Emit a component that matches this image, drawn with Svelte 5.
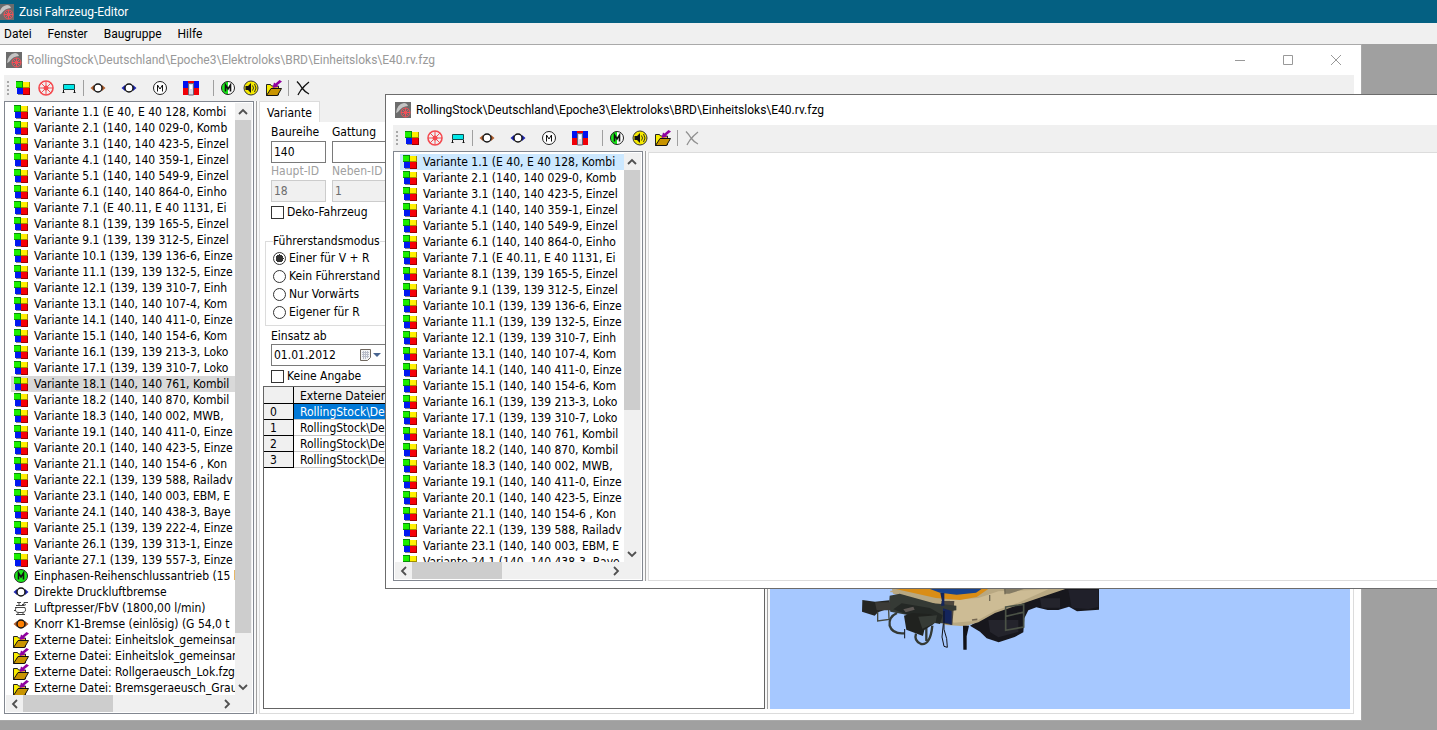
<script>
  const variants = [
    '1.1 (E 40, E 40 128, Kombi',
    '2.1 (140, 140 029-0, Komb',
    '3.1 (140, 140 423-5, Einzel',
    '4.1 (140, 140 359-1, Einzel',
    '5.1 (140, 140 549-9, Einzel',
    '6.1 (140, 140 864-0, Einho',
    '7.1 (E 40.11, E 40 1131, Ei',
    '8.1 (139, 139 165-5, Einzel',
    '9.1 (139, 139 312-5, Einzel',
    '10.1 (139, 139 136-6, Einze',
    '11.1 (139, 139 132-5, Einze',
    '12.1 (139, 139 310-7, Einh',
    '13.1 (140, 140 107-4, Kom',
    '14.1 (140, 140 411-0, Einze',
    '15.1 (140, 140 154-6, Kom',
    '16.1 (139, 139 213-3, Loko',
    '17.1 (139, 139 310-7, Loko',
    '18.1 (140, 140 761, Kombil',
    '18.2 (140, 140 870, Kombil',
    '18.3 (140, 140 002, MWB,',
    '19.1 (140, 140 411-0, Einze',
    '20.1 (140, 140 423-5, Einze',
    '21.1 (140, 140 154-6 , Kon',
    '22.1 (139, 139 588, Railadv',
    '23.1 (140, 140 003, EBM, E',
    '24.1 (140, 140 438-3, Baye',
    '25.1 (139, 139 222-4, Einze',
    '26.1 (139, 139 313-1, Einze',
    '27.1 (139, 139 557-3, Einze'
  ].map((v) => ({ icon: 'variant', text: 'Variante ' + v }));

  const parts = [
    { icon: 'motorOn', text: 'Einphasen-Reihenschlussantrieb (15 k' },
    { icon: 'brakeBlue', text: 'Direkte Druckluftbremse' },
    { icon: 'pump', text: 'Luftpresser/FbV (1800,00 l/min)' },
    { icon: 'brakeFull', text: 'Knorr K1-Bremse (einlösig) (G 54,0 t' },
    { icon: 'folder', text: 'Externe Datei: Einheitslok_gemeinsar' },
    { icon: 'folder', text: 'Externe Datei: Einheitslok_gemeinsar' },
    { icon: 'folder', text: 'Externe Datei: Rollgeraeusch_Lok.fzg' },
    { icon: 'folder', text: 'Externe Datei: Bremsgeraeusch_Grau' }
  ];

  const rows = [...variants, ...parts];
  const path = 'RollingStock\\Deutschland\\Epoche3\\Elektroloks\\BRD\\Einheitsloks\\E40.rv.fzg';

  const tools = [
    ['variant', 'Variante'],
    ['wheel', 'Achse'],
    ['bogie', 'Drehgestell'],
    null,
    ['brakeBrown', 'Bremse', true],
    ['brakeBlue', 'Direkte Bremse', true],
    ['motor', 'Antrieb', true],
    ['cab', 'Führerstand', true],
    null,
    ['motorHalf', 'Antriebsmodell'],
    ['sound', 'Sound'],
    ['folder', 'Externe Datei'],
    null,
    ['cross', 'Entfernen']
  ];

  const modes = ['Einer für V + R', 'Kein Führerstand', 'Nur Vorwärts', 'Eigener für R'];
  let mode = $state(modes[0]);
  let first = $state(17);
  let second = $state(0);
  let series = $state('140');
  let kind = $state('');
  let date = $state('01.01.2012');
</script>

{#snippet icon(name)}
  <svg class="icon" viewBox="0 0 16 16" width="16" height="16" aria-hidden="true">
    {#if name === 'variant'}
      <path d="M3 3h12v12H3z" fill="#888" />
      <path d="M1 1h7v7H1z" fill="#0a8a0a" /><path d="M1 2h6v5H1z" fill="#1cf000" />
      <path d="M8 2h7v6H8z" fill="#a09000" /><path d="M8 2h6v5H8z" fill="#fff000" />
      <path d="M2 8h6v6H2z" fill="#0018f0" />
      <path d="M8 8h7v7H8z" fill="#900" /><path d="M8 8h6v6H8z" fill="#f60008" />
    {:else if name === 'wheel'}
      <g fill="none" stroke="#f44a50">
        <circle cx="8" cy="8" r="7" stroke-width="1.6" />
        <path d="M8 1v14M1 8h14M3 3l10 10M13 3 3 13" />
      </g>
      <circle cx="8" cy="8" r="2.5" fill="#f44a50" />
    {:else if name === 'bogie'}
      <path d="M2.500 4.500h11v5h-11z" fill="#00e8e8" stroke="#164848" />
      <path d="M2.500 10v3M13.500 10v3M1.500 12.500h2M12.500 12.500h2" stroke="#111" fill="none" />
    {:else if name === 'brakeBrown' || name === 'brakeBlue' || name === 'brakeFull'}
      <path
        d="M0.500 8 4 5v6zM15.500 8 12 5v6z"
        fill={name === 'brakeBlue' ? '#2028b0' : '#b06030'}
      />
      <circle cx="8" cy="8" r="4" fill={name === 'brakeFull' ? '#ff8000' : '#fff'} stroke="#111" stroke-width="1.4" />
    {:else if name === 'motor' || name === 'motorOn' || name === 'motorHalf'}
      <circle cx="8" cy="8" r="6.500" fill={name === 'motorOn' ? '#18e818' : '#fff'} />
      {#if name === 'motorHalf'}<path d="M8 1.500a6.500 6.500 0 0 0 0 13z" fill="#18e818" />{/if}
      <circle cx="8" cy="8" r="6.500" fill="none" stroke="#222" />
      <path d="M5.500 11.500v-6.500l2.500 4 2.500-4v6.500" fill="none" stroke="#111" stroke-width={name === 'motor' ? 1 : 1.6} />
    {:else if name === 'cab'}
      <path d="M0 1h16v7H0z" fill="#0010f0" />
      <path d="M0 8h5v7H0zM11 8h5v7h-5zM5 1h6v2H5z" fill="#f00008" />
      <path d="M5.500 3.500h5V15h-5z" fill="#d8dcec" stroke="#667" />
      <path d="M7 5h2v4H7z" fill="#fff" />
    {:else if name === 'sound'}
      <circle cx="8" cy="8" r="7" fill="#f4e800" stroke="#333" />
      <path d="M2.500 6h2.500l3-3v10l-3-3H2.500z" fill="#111" />
      <path d="M9.500 5.500q2 2.500 0 5M11.500 4q3 4 0 8" fill="none" stroke="#332" />
    {:else if name === 'folder'}
      <path d="M.5 15.500v-11h4l1 1.500h7v9z" fill="#f8ec00" stroke="#222" />
      <path d="M.5 15.500 5 8.500h10.500l-4 7z" fill="#c89400" stroke="#111" />
      <path d="M16 1.500 13.500 0 9.500 3.500 8 2.500 6.500 8l6-1-1.500-1.500z" fill="#9000a0" />
    {:else if name === 'pump'}
      <path
        d="M4 2.500h4M6 2.500v3M9 4.500h2v-2h4M3 5.500h8l2-1M2 7.500h10M3 7.500q-2 5 3 5h3q5 0 3-5M1 10.500h2M3 14.500h9M5 12.500v2M10 12.500v2"
        fill="none"
        stroke="#444"
      />
    {:else if name === 'cross'}
      <path class="cross" d="M2 1.500q3 3 5 6.500 3 4 7 6M14 2Q9 6 6 10q-2 3-3 5" fill="none" stroke-width="1.3" />
    {/if}
  </svg>
{/snippet}

{#snippet appIcon()}
  <svg class="app-icon" viewBox="0 0 16 16" width="16" height="16" aria-hidden="true">
    <path d="M0 0h16v16H0z" fill="#6c6c6c" />
    <path d="M1 11Q2 2 9 1q3 0 4 3Q7 4 3 10z" fill="#c4c4c4" />
    <g fill="none" stroke="#f05058">
      <circle cx="10.500" cy="10.500" r="4.500" />
      <path d="M10.500 6v9M6 10.500h9M7.500 7.500l6 6M13.500 7.500l-6 6" />
    </g>
  </svg>
{/snippet}

{#snippet chevron(turn)}
  <svg width="10" height="10" viewBox="0 0 10 10" aria-hidden="true">
    <path d="M1 7 5 3l4 4" fill="none" stroke="#505050" stroke-width="1.8" transform="rotate({turn} 5 5)" />
  </svg>
{/snippet}

{#snippet childHead(closable)}
  <header class="caption">
    {@render appIcon()}
    <span class="caption-text">{path}</span>
    {#if closable}
      <button class="sys" aria-label="Minimieren"><svg width="12" height="12"><path d="M1 6.500h10" /></svg></button>
      <button class="sys" aria-label="Maximieren"><svg width="12" height="12"><path d="M1.500 1.500h9v9h-9z" /></svg></button>
      <button class="sys" aria-label="Schließen"><svg width="12" height="12"><path d="M1 1l10 10M11 1 1 11" /></svg></button>
    {/if}
  </header>
  <div class="toolbar">
    <span class="grip"></span>
    {#each tools as tool}
      {#if tool}
        <button
          class="tool"
          class:wide={tool[2]}
          aria-label={tool[1]}
          disabled={tool[0] === 'cross' && !closable}
        >{@render icon(tool[0])}</button>
      {:else}
        <span class="sep"></span>
      {/if}
    {/each}
  </div>
{/snippet}

{#snippet tree(selected, pick, shown)}
  <div class="tree">
    <div class="tree-main">
      <ul>
        {#each rows as row, i}
          <li class:selected={i === selected}>
            {@render icon(row.icon)}
            <button class="row" onclick={() => pick(i)}>{row.text}</button>
          </li>
        {/each}
      </ul>
      <div class="vbar">
        <button aria-label="Nach oben">{@render chevron(0)}</button>
        <div class="track"><div class="thumb" style="height: {shown}%"></div></div>
        <button aria-label="Nach unten">{@render chevron(180)}</button>
      </div>
    </div>
    <div class="hbar">
      <button aria-label="Nach links">{@render chevron(270)}</button>
      <div class="track"><div class="thumb" style="width: 46%"></div></div>
      <button aria-label="Nach rechts">{@render chevron(90)}</button>
    </div>
  </div>
{/snippet}

<div class="app">
  <header class="titlebar">{@render appIcon()}<span>Zusi Fahrzeug-Editor</span></header>
  <nav class="menu">
    <button>Datei</button>
    <button>Fenster</button>
    <button>Baugruppe</button>
    <button>Hilfe</button>
  </nav>

  <main class="desktop">
    <section class="child back">
      {@render childHead(true)}
      <div class="client">
        {@render tree(first, (i) => (first = i), 92)}
        <div class="splitter"></div>
        <div class="pages">
          <div class="tabs"><button class="tab">Variante</button></div>
          <div class="page">
            <div class="editor">
              <form class="form">
                <div class="fields">
                  <label>Baureihe <input type="text" bind:value={series} /></label>
                  <label>Gattung <input type="text" bind:value={kind} /></label>
                  <label class="off">Haupt-ID <input type="text" value="18" disabled /></label>
                  <label class="off">Neben-ID <input type="text" value="1" disabled /></label>
                </div>
                <label class="check"><input type="checkbox" />Deko-Fahrzeug</label>
                <fieldset>
                  <legend>Führerstandsmodus</legend>
                  {#each modes as m}
                    <label class="radio"><input type="radio" name="mode" value={m} bind:group={mode} />{m}</label>
                  {/each}
                </fieldset>
                <label class="since" for="since">Einsatz ab</label>
                <div class="date">
                  <input id="since" type="text" bind:value={date} />
                  <button type="button" aria-label="Kalender">
                    <svg width="22" height="14" viewBox="0 0 22 14">
                      <path d="M.5 1.500h10v8l-3 3h-7z" fill="#f4f4f4" stroke="#706860" />
                      <path d="M2 4.500h7M2 6.500h7M2 8.500h7M3.500 3v8M5.500 3v8M7.500 3v7" stroke="#b8bcc8" />
                      <path d="M13 5h8l-4 4z" fill="#486490" />
                    </svg>
                  </button>
                </div>
                <label class="check"><input type="checkbox" />Keine Angabe</label>
              </form>
              <div class="files">
                <table>
                  <thead><tr><th></th><th>Externe Dateien</th></tr></thead>
                  <tbody>
                    {#each [0, 1, 2, 3] as n}
                      <tr><th>{n}</th><td class:current={n === 0}>RollingStock\De</td></tr>
                    {/each}
                  </tbody>
                </table>
              </div>
            </div>
            <div class="splitter"></div>
            <div class="view">
              <svg width="270" height="70" viewBox="0 0 810 210" role="img" aria-label="Lokomotive">
                <path d="M345 122 420 78 500 50 580 25 640 8h92v66l-66 5-24-14-32 10-32 0-34-8-24 9-12 24-3 42-26 14-48 16-36-12-20-20z" fill="#17171d" />
                <path d="M640 14h90v52l-30 6-50-4z" fill="#20202a" />
                <path d="M555 40h60v28h-55zM400 105h90v36l-60 16-25-16z" fill="#24242c" />
                <path d="M110 8h532l-82 28-70 24-70 24-50 28-40 12-58-4-18-9-10-50-130-35z" fill="#b8a882" />
                <path d="M285 45l85-6 60-20 150-6-90 40-70 24-54 30-70 6-10-12z" fill="#cdbc95" />
                <path d="M258 48h40l-6 72-20-3-12-20z" fill="#4e483f" />
                <path d="M105 8h300l-40 28-50 9-72-6z" fill="#d98d16" />
                <path d="M215 8h170l-22 15-58 6-50-6z" fill="#17428c" />
                <path d="M445 8h74l-56 18h-12z" fill="#847b64" /><path d="M450 8v20M404 30v18" stroke="#716955" stroke-width="4" />
                <path d="M104 32l30-6 100 28 70 8v14l-32 4 8 36-30-2-48-16-96-18-4-22z" fill="#353a35" />
                <path d="M140 55l85 14 38 22-8 26-50-10-90-34z" fill="#242825" />
                <path d="M22 45l38 5 43-4v24l-34 12-10 10-38-12z" fill="#242523" />
                <path d="M60 52h46v24H65z" fill="#3c3b37" />
                <path d="M68 80v28l34-5-1-28" fill="none" stroke="#44483f" stroke-width="4" />
                <path d="M126 84q-26 12-22 38 8 26 44 23M183 146q-7 22 15 31 28 5 34-55M214 112v56" fill="none" stroke="#343a36" stroke-width="7" />
                <path d="M147 92l25-8 55 4 20 10-12 20-27 17-4 18-50-19z" fill="#20221f" />
                <path d="M190 95l56-4-4 22-40 18z" fill="#363b36" />
                <path d="M145 73l30-8 4 9-27 8z" fill="#5e5855" />
                <path d="M256 24h12v38h-10l3-14zM264 70v44h12l14 6V78z" fill="#14255c" />
                <path d="M237 46h22v9h-20zM106 17h25v5h-25z" fill="#bba881" />
                <path d="M265 116l-4 40 6 28 10 3-2-26-8-28V78" fill="none" stroke="#111218" stroke-width="3" />
                <path d="M324 122h18l-7 32v40h-10z" fill="#111218" />
                <path d="M149 132v28" stroke="#111218" stroke-width="3" />
                <path d="M351 105l16-2" stroke="#736650" stroke-width="5" />
                <path d="M452 66l54-8v68l-54 10zM452 94l52-12" fill="none" stroke="#4b5246" stroke-width="5" />
              </svg>
            </div>
          </div>
        </div>
      </div>
    </section>

    <section class="child front">
      {@render childHead(false)}
      <div class="client">
        {@render tree(second, (i) => (second = i), 64)}
        <div class="splitter"></div>
        <div class="blank"></div>
      </div>
    </section>
  </main>
</div>

<style>
  :global(body) {
    overflow: hidden;
  }

  .app {
    display: flex;
    flex-direction: column;
    height: 100vh;
    color: #000;
    font: 12px/16px 'DejaVu Sans Condensed', 'DejaVu Sans', sans-serif;
  }

  .app * {
    box-sizing: border-box;
  }

  button,
  input {
    margin: 0;
    padding: 0;
    border: 0;
    background: none;
    color: inherit;
    font: inherit;
  }

  svg {
    display: block;
    flex: none;
  }

  .titlebar {
    display: flex;
    flex: none;
    align-items: center;
    gap: 5px;
    height: 23px;
    margin-left: -2px;
    background: #046082;
    color: #fff;
    font-family: Roboto, sans-serif;
  }

  .menu {
    display: flex;
    flex: none;
    gap: 16px;
    height: 21px;
    padding-left: 4px;
    background: #f0f0f0;
    font-family: Roboto, sans-serif;
  }

  .desktop {
    position: relative;
    flex: 1;
    overflow: hidden;
    background: #a0a0a0;
  }

  .child {
    position: absolute;
    display: flex;
    flex-direction: column;
    padding: 0 7px 7px;
    border: 1px solid #a9a9a9;
    background: #fff;
  }

  .back {
    inset: 0 75px 9px -4px;
    padding-bottom: 6px;
  }

  .front {
    top: 50px;
    left: 385px;
    width: 1100px;
    height: 495px;
    border-color: #6c6c6c;
  }

  .caption {
    display: flex;
    flex: none;
    align-items: center;
    height: 30px;
    padding-left: 2px;
    font-family: Roboto, sans-serif;
  }

  .caption-text {
    flex: 1;
    margin-left: 5px;
    white-space: nowrap;
  }

  .back .caption {
    margin-right: -6px;
    color: #999;
  }

  .sys {
    display: grid;
    place-items: center;
    width: 48px;
    height: 30px;
  }

  .sys path {
    fill: none;
    stroke: #999;
  }

  .toolbar {
    display: flex;
    flex: none;
    align-items: center;
    height: 26px;
    background: #f0f0f0;
  }

  .grip {
    width: 7px;
    height: 15px;
    background: repeating-linear-gradient(#a8a8a8 0 2px, transparent 2px 4px) 3px 0 / 2px 15px no-repeat;
  }

  .tool {
    width: 23px;
    height: 22px;
    padding-left: 4px;
  }

  .wide {
    width: 31px;
  }

  .sep {
    width: 6px;
    height: 16px;
    background: linear-gradient(#a0a0a0, #a0a0a0) 3px 0 / 1px 16px no-repeat;
  }

  .cross {
    stroke: #111;
  }

  .tool:disabled .cross {
    stroke: #909090;
  }

  .client {
    display: flex;
    flex: 1;
    min-height: 0;
    background: #f0f0f0;
  }

  .tree {
    display: flex;
    flex: none;
    flex-direction: column;
    width: 250px;
    padding: 1px;
    border: 1px solid #828790;
    background: #fff;
  }

  .tree-main {
    display: flex;
    flex: 1;
    min-height: 0;
  }

  ul {
    flex: 1;
    min-width: 0;
    margin: 0;
    padding: 1px 0 0 5px;
    overflow: hidden;
    list-style: none;
  }

  li {
    display: flex;
    gap: 5px;
    height: 16px;
    padding-left: 2px;
    white-space: nowrap;
  }

  .selected {
    background: #d9d9d9;
  }

  .front .selected {
    background: #cce8ff;
  }

  .vbar,
  .hbar {
    display: flex;
    flex: none;
    background: #f0f0f0;
  }

  .vbar {
    flex-direction: column;
    width: 17px;
    padding-right: 1px;
  }

  .hbar {
    height: 17px;
    padding-right: 17px;
  }

  .vbar button,
  .hbar button {
    display: grid;
    flex: none;
    place-items: center;
    width: 17px;
    height: 17px;
  }

  .vbar button {
    width: 16px;
  }

  .track {
    flex: 1;
  }

  .thumb {
    height: 100%;
    background: #cdcdcd;
  }

  .splitter {
    flex: none;
    width: 5px;
    background: linear-gradient(#a0a0a0, #a0a0a0) 2px 0 / 1px 100% no-repeat #f8f8f8;
  }

  .pages {
    display: flex;
    flex: 1;
    flex-direction: column;
    min-width: 0;
  }

  .tabs {
    height: 21px;
  }

  .tab {
    height: 22px;
    padding: 0 7px;
    border: 1px solid #dcdcdc;
    border-bottom: 0;
    background: #fff;
  }

  .page {
    display: flex;
    flex: 1;
    min-height: 0;
    padding: 2px 3px 4px;
    border: 1px solid #dcdcdc;
    border-top: 0;
    background: #fff;
  }

  .editor {
    display: flex;
    flex: 0 0 502px;
    flex-direction: column;
  }

  .form {
    display: flex;
    flex-direction: column;
    align-items: flex-start;
    padding-left: 8px;
  }

  .fields {
    display: grid;
    grid-template-columns: 55px 55px;
    gap: 0 6px;
  }

  .fields label {
    line-height: 17px;
    white-space: nowrap;
  }

  .fields input,
  .date {
    display: block;
    width: 100%;
    height: 22px;
    padding: 0 2px;
    border: 1px solid #7a7a7a;
    background: #fff;
  }

  .off {
    color: #a0a0a0;
  }

  .fields input:disabled {
    border-color: #ccc;
    background: #f0f0f0;
    color: #6d6d6d;
  }

  .check,
  .radio {
    display: flex;
    align-items: center;
    gap: 3px;
    height: 20px;
  }

  .check input,
  .radio input {
    appearance: none;
    width: 13px;
    height: 13px;
    border: 1px solid #333;
    background: #fff;
  }

  .check input:checked {
    background: #333;
  }

  fieldset {
    width: 124px;
    margin: 11px 0 0 -6px;
    padding: 0 0 4px 7px;
    border: 1px solid #dcdcdc;
  }

  legend {
    padding: 0;
  }

  .radio {
    height: 18px;
    white-space: nowrap;
  }

  .radio input {
    border-radius: 50%;
  }

  .radio input:checked {
    background: radial-gradient(#333 0 4px, #fff 4px);
  }

  .since {
    margin-top: 2px;
  }

  .date {
    display: flex;
    align-items: center;
    width: 122px;
  }

  .date input {
    width: 86px;
  }

  .files {
    flex: 1;
    overflow: hidden;
    border: 1px solid #646464;
  }

  table {
    width: 100%;
    border-spacing: 0;
  }

  th,
  td {
    height: 16px;
    padding: 1px 6px 0;
    font-weight: 400;
    line-height: 14px;
    text-align: left;
  }

  th {
    border-right: 1px solid #000;
    border-bottom: 1px solid #000;
    background: #f0f0f0;
  }

  th:first-child {
    width: 30px;
  }

  thead th {
    height: 17px;
    padding-top: 2px;
  }

  td {
    border-bottom: 1px solid #c8c8c8;
  }

  .current {
    background: #0078d7;
    color: #fff;
  }

  .view {
    display: flex;
    flex: 1;
    align-items: flex-end;
    min-width: 0;
    padding: 0 0 54px 85px;
    background: #a6c8ff;
  }

  .blank {
    flex: 1;
    margin-top: 1px;
    border: 1px solid #dcdcdc;
    background: #fff;
  }
</style>
